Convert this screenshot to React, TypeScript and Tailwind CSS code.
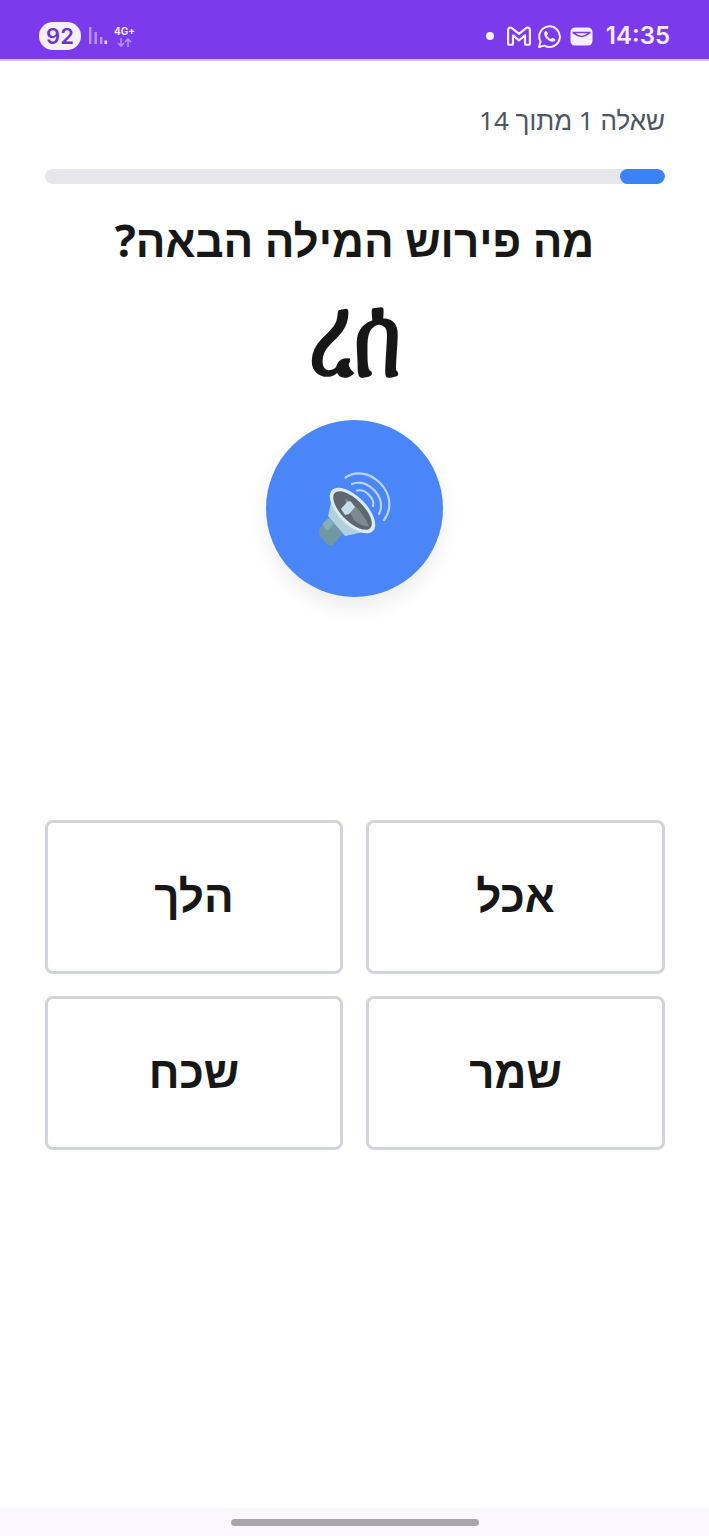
import { useState } from 'react'

const OPTIONS = ['אכל', 'הלך', 'שמר', 'שכח']

function CellBars() {
  return (
    <svg width="20" height="20" viewBox="0 0 20 20" fill="#b795f4">
      <rect x="0" y="1" width="2.4" height="17" />
      <rect x="5.5" y="6" width="2.4" height="12" />
      <rect x="11" y="11" width="2.4" height="7" />
      <rect x="15.500" y="14.500" width="2.600" height="3.500" fill="#e9dcff" />
    </svg>
  )
}

function DataArrows() {
  return (
    <svg width="15" height="9" viewBox="0 0 15 9" fill="none" stroke="#b795f4" strokeWidth="1.500">
      <path d="M4 0v8M1 5l3 3 3-3" />
      <path d="M11 9V1M8 4l3-3 3 3" />
    </svg>
  )
}

function GmailIcon() {
  return (
    <svg width="24" height="20" viewBox="1 1 22 18" className="overflow-visible" fill="none" stroke="#f5eeff" strokeWidth="2" strokeLinejoin="round">
      <path d="M2 4.500C2 2.500 4 1.600 5.500 2.800L12 8l6.500-5.200C20 1.600 22 2.500 22 4.500V17a1 1 0 0 1-1 1h-2.500a1 1 0 0 1-1-1V9.500L12 14 6.500 9.500V17a1 1 0 0 1-1 1H3a1 1 0 0 1-1-1z" />
    </svg>
  )
}

function WhatsappIcon() {
  return (
    <svg width="25" height="25" viewBox="0 0 25 25" fill="none">
      <path d="M2 23l1.500-5.500A10.300 10.300 0 1 1 7.500 21.600z" stroke="#f5eeff" strokeWidth="2" strokeLinejoin="round" />
      <path d="M9 7c-.8 0-1.800 1-1.800 2.500 0 3.500 4.500 8.300 8.500 8.300 1.600 0 2.700-1 2.700-2 0-.6-2.600-2-3-2-.5 0-1 1.200-1.500 1.200-1.200 0-3.900-2.700-3.900-3.800 0-.5 1-1 1-1.500S9.600 7 9 7z" fill="#f5eeff" />
    </svg>
  )
}

function WalletIcon() {
  return (
    <svg width="23" height="19" viewBox="0 0 23 19">
      <rect x="0.500" y="0.500" width="22" height="18" rx="4.500" fill="#f5eeff" />
      <path d="M2.500 5.500h18M2.500 5.500c2 0 3 4 9 4s7-4 9-4" fill="none" stroke="#7c3aed" strokeWidth="1.600" />
    </svg>
  )
}

function SpeakerEmoji() {
  return (
    <svg width="76" height="78" viewBox="0 0 76 78" fill="none">
      {/* sound waves */}
      <path d="M28.500 7.500C38 1 52 2 63 13c10 10 13 25 4 37" stroke="#b9d3f5" strokeWidth="2.200" strokeLinecap="round" />
      <path d="M35 14c7-3 15-1 22 6 7 7 9 16 5 24" stroke="#b9d3f5" strokeWidth="2.200" strokeLinecap="round" />
      <path d="M40 20.500c5-1 9 1 12 4.500 4 4 5 8 4 11" stroke="#b9d3f5" strokeWidth="2.200" strokeLinecap="round" />
      {/* body and neck */}
      <path d="M3 58l9-10 14 15-9 11c-2 2-5 2-7 0l-7-8c-1-2-1-6 0-8z" fill="#6f98a3" />
      <path d="M5 54l7-6 5 6-7 7z" fill="#86aeb8" />
      {/* horn */}
      <path d="M11 46L17 20 56 60 28 66z" fill="#b0d0e0" />
      <ellipse cx="35.500" cy="40.500" rx="29" ry="14" transform="rotate(45 35.500 40.500)" fill="#dcebf3" />
      <ellipse cx="35.500" cy="40.500" rx="25" ry="11" transform="rotate(45 35.500 40.500)" fill="#5c6770" />
      <path d="M28 28c9 6 18 15 24 28-3 1-9-1-15-6-4-7-8-15-9-22z" fill="#7f8a90" />
      <path d="M24 39l6-7c2-1 4-1 5 1l3 4-6 7-4 1z" fill="#c6dfea" />
    </svg>
  )
}

export default function App() {
  const [picked, setPicked] = useState<string | null>(null)

  return (
    <div className="flex min-h-[1536px] flex-col bg-white font-['Noto_Sans','Liberation_Sans',sans-serif]">
      {/* Status bar */}
      <div className="flex h-[61px] items-center justify-between border-b-2 border-[#d9c6fb] bg-[#7c3aed] pl-[39px] pr-[39px] pt-[13px]">
        <div className="flex items-center gap-2">
          <span className="flex h-[28px] w-[42px] items-center justify-center rounded-full bg-[#f6f0ff] font-['Inter'] text-[22px] font-semibold text-[#6d35c9]">
            92
          </span>
          <CellBars />
          <div className="-ml-[3px] flex flex-col items-center gap-px">
            <span className="font-['Inter'] text-[10px] font-bold leading-[11px] text-[#f0e6ff]">4G+</span>
            <DataArrows />
          </div>
        </div>
        <div className="flex items-center">
          <span className="mr-[13px] h-2 w-2 rounded-full bg-[#f5eeff]" />
          <div className="mr-[13px] flex items-center">
            <GmailIcon />
            <div className="ml-1.5 mr-2">
              <WhatsappIcon />
            </div>
            <WalletIcon />
          </div>
          <span className="font-['Inter'] text-[24px] font-semibold text-[#f5eeff]">14:35</span>
        </div>
      </div>

      {/* Quiz */}
      <div dir="rtl" className="flex flex-1 flex-col px-[44px]">
        <p className="mt-[40px] text-[26px] leading-[38px] text-[#4b5563]">שאלה 1 מתוך 14</p>
        <div className="ml-px mt-[30px] h-[15px] overflow-hidden rounded-full bg-[#e5e7eb]">
          <div className="h-full w-[45px] rounded-full bg-[#3b82f6]" />
        </div>
        <h1 className="mt-[26px] text-center text-[44px] font-bold leading-[60px] text-[#171717]">
          מה פירוש המילה הבאה?
        </h1>
        <div dir="ltr" className="mt-[41px] text-center text-[80px] font-bold leading-[70px] text-[#171717]">
          <span className="inline-block origin-bottom scale-y-[1.45]">ረሰ</span>
        </div>
        <button className="mx-auto mt-[39px] flex h-[177px] w-[177px] items-center justify-center rounded-full bg-[#4a86f7] shadow-[0_10px_20px_rgba(0,0,0,0.08)]">
          <SpeakerEmoji />
        </button>
        <div className="ml-px mt-[223px] grid grid-cols-[299px_298px] gap-x-[23px] gap-y-[22px]">
          {OPTIONS.map((option) => (
            <button
              key={option}
              onClick={() => setPicked(option)}
              className={`flex h-[154px] items-center justify-center rounded-lg border-[3px] bg-white pb-1 text-[44px] font-semibold text-[#171717] ${
                picked === option ? 'border-[#3b82f6]' : 'border-[#d1d5db]'
              }`}
            >
              {option}
            </button>
          ))}
        </div>
      </div>

      {/* Gesture bar */}
      <div className="flex h-[28px] items-center justify-center bg-[#faf7ff]">
        <div className="h-[7px] w-[248px] rounded-full bg-[#a8a5ac]" />
      </div>
    </div>
  )
}
